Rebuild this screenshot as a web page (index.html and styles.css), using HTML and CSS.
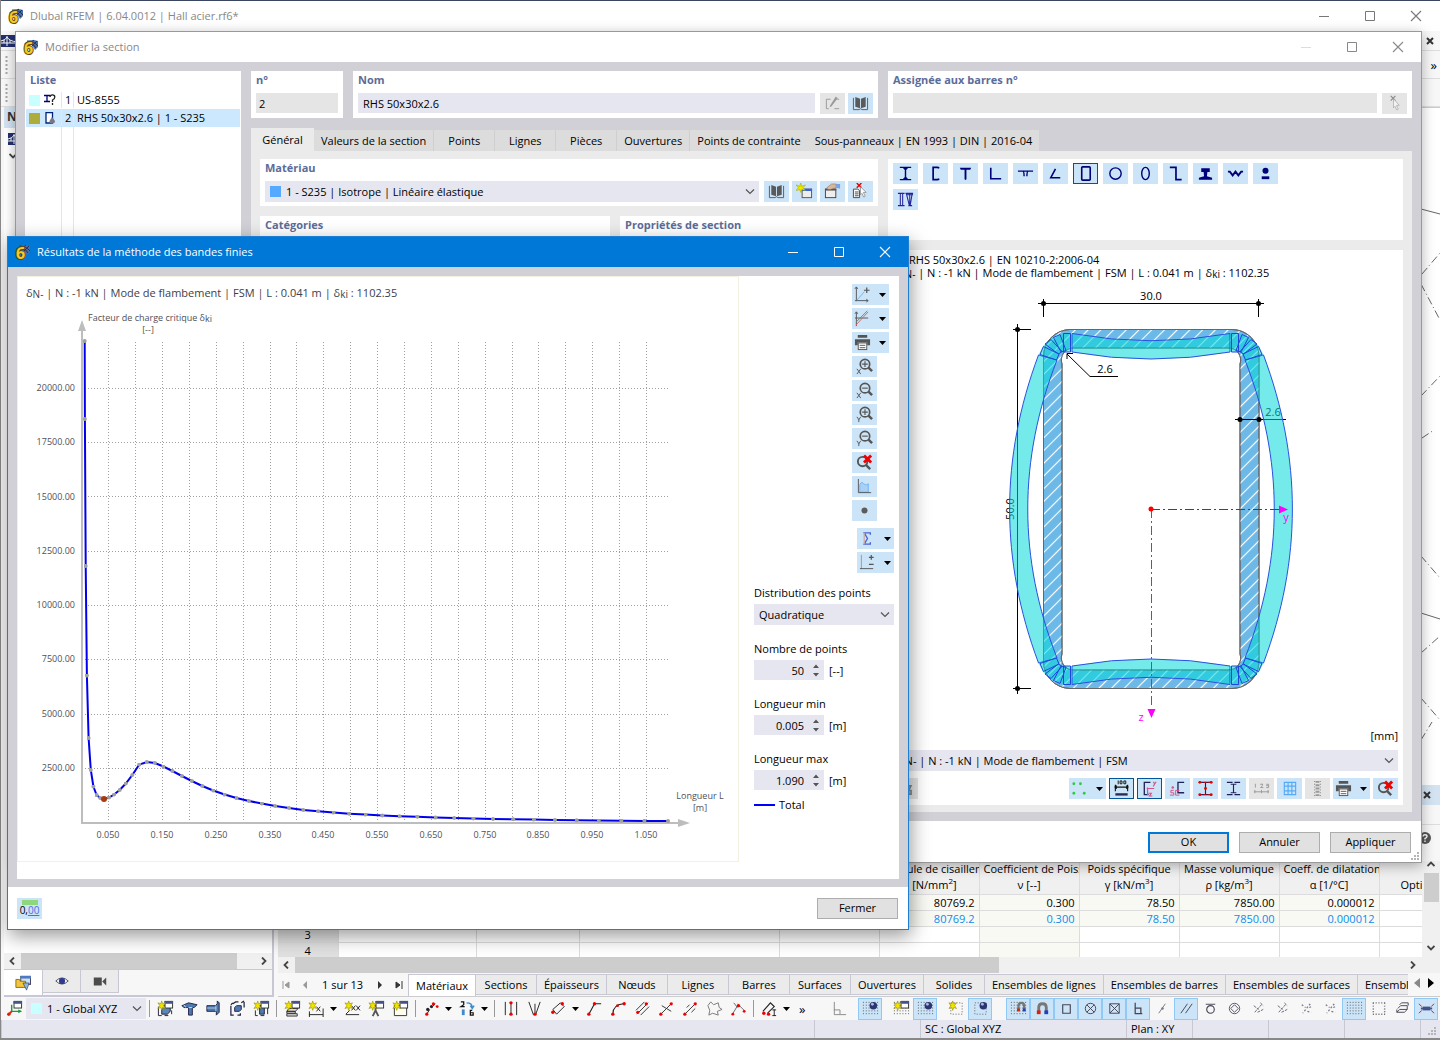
FILE: index.html
```html
<!DOCTYPE html>
<html lang="fr">
<head>
<meta charset="utf-8">
<meta name="viewport" content="width=device-width, initial-scale=1">
<title>Dlubal RFEM | 6.04.0012 | Hall acier.rf6*</title>
<link rel="stylesheet" href="styles.css">
</head>
<body>
<svg class="defs" aria-hidden="true">
<defs>
<symbol id="logo" viewBox="0 0 16 16"><path d="M2 4Q7 -1 15 2L15 8L12 11L9 6Q5 4 2 4Z" fill="#4a6fa8"/><path d="M1.500 5Q8 1 13 9M4 2Q11 2 15 7M6 5L11 1M9 7L14 2" stroke="#22324f" fill="none"/><text x="1" y="15" class="six">6</text></symbol>
<symbol id="min" viewBox="0 0 12 12"><path d="M1 6.500H11" stroke="currentColor"/></symbol>
<symbol id="max" viewBox="0 0 12 12"><path d="M1.500 1.500H10.500V10.500H1.500Z" fill="none" stroke="currentColor"/></symbol>
<symbol id="close" viewBox="0 0 12 12"><path d="M1 1L11 11M11 1L1 11" stroke="currentColor" stroke-width="1.100"/></symbol>
<symbol id="xbold" viewBox="0 0 8 8"><path d="M1 1L7 7M7 1L1 7" stroke="#333" stroke-width="2"/></symbol>
<symbol id="flag" viewBox="0 0 16 12"><path d="M0 0H16V12H0Z" fill="#23306f"/><path d="M0 8H16M6 1V11M0 6Q5 5 6 2Q8 6 16 7M3 5V8M9 5V8" stroke="#fff" fill="none"/></symbol>
<symbol id="grip" viewBox="0 0 3 20"><path d="M1.500 1V20" stroke="#a8a8a8" stroke-width="2" stroke-dasharray="2 2"/></symbol>
<symbol id="chev" viewBox="0 0 10 6"><path d="M1 .5L5 4.500L9 .5" fill="none" stroke="#555" stroke-width="1.200"/></symbol>
<symbol id="caret" viewBox="0 0 7 4"><path d="M0 0H7L3.500 4Z" fill="#000"/></symbol>
<symbol id="spin" viewBox="0 0 6 13"><path d="M0 4L3 0.500L6 4ZM0 9L3 12.500L6 9Z" fill="#555"/></symbol>
<symbol id="al" viewBox="0 0 6 8"><path d="M5 .5L1.500 4L5 7.500" fill="none" stroke="#444" stroke-width="1.800"/></symbol>
<symbol id="ar" viewBox="0 0 6 8"><path d="M1 .5L4.500 4L1 7.500" fill="none" stroke="#444" stroke-width="1.800"/></symbol>
<symbol id="au" viewBox="0 0 8 6"><path d="M.5 5L4 1.500L7.500 5" fill="none" stroke="#444" stroke-width="1.800"/></symbol>
<symbol id="ad" viewBox="0 0 8 6"><path d="M.5 1L4 4.500L7.500 1" fill="none" stroke="#444" stroke-width="1.800"/></symbol>
<symbol id="sizer" viewBox="0 0 9 9"><path d="M6 0h2v2H6zM6 3h2v2H6zM6 6h2v2H6zM3 3h2v2H3zM3 6h2v2H3zM0 6h2v2H0z" fill="#b5b5b5"/></symbol>
<!-- section shapes -->
<symbol id="s-i" viewBox="0 0 18 18"><path d="M3 2.500H15M3 15.500H15M9 2V16M7 3L9 5L11 3M7 15L9 13L11 15" fill="none" stroke="#00007a" stroke-width="1.500"/></symbol>
<symbol id="s-c" viewBox="0 0 18 18"><path d="M13 3L11 2.500H6.500V15.500H11L13 15" fill="none" stroke="#00007a" stroke-width="1.800"/></symbol>
<symbol id="s-t" viewBox="0 0 18 18"><path d="M3 3H15L14 5L10 5V15L9 16L8 15V5L4 5Z" fill="#00007a"/></symbol>
<symbol id="s-l" viewBox="0 0 18 18"><path d="M4 3V14.500H15" fill="none" stroke="#00007a" stroke-width="1.700"/></symbol>
<symbol id="s-tt" viewBox="0 0 18 18"><path d="M1 6.500H6Q7.500 6.500 7.500 12M17 6.500H12Q10.500 6.500 10.500 12M6 6.500H12" fill="none" stroke="#00007a" stroke-width="1.500"/></symbol>
<symbol id="s-a" viewBox="0 0 18 18"><path d="M9 4L4 13.500H14" fill="none" stroke="#00007a" stroke-width="1.700"/></symbol>
<symbol id="s-r" viewBox="0 0 18 18"><rect x="5" y="2" width="9" height="14" rx="1" fill="none" stroke="#00007a" stroke-width="1.700"/></symbol>
<symbol id="s-o" viewBox="0 0 18 18"><circle cx="9" cy="9" r="6" fill="none" stroke="#00007a" stroke-width="1.500"/></symbol>
<symbol id="s-e" viewBox="0 0 18 18"><ellipse cx="9" cy="9" rx="4" ry="6.500" fill="none" stroke="#00007a" stroke-width="1.500"/></symbol>
<symbol id="s-z" viewBox="0 0 18 18"><path d="M3 2.500H9.500V15.500H15.500" fill="none" stroke="#00007a" stroke-width="1.800"/></symbol>
<symbol id="s-rail" viewBox="0 0 18 18"><path d="M4.500 3.500H13.500V7.500H11L10.500 12L16 13.500V15.500H2V13.500L7.500 12L7 7.500H4.500Z" fill="#00007a"/></symbol>
<symbol id="s-w" viewBox="0 0 18 18"><path d="M1 7H3L6 11L9 7L12 11L15 7H17" fill="none" stroke="#00007a" stroke-width="2"/></symbol>
<symbol id="s-m" viewBox="0 0 18 18"><circle cx="9" cy="6" r="3.200" fill="#00007a"/><path d="M5 12H13V15H5Z" fill="#00007a"/></symbol>
<symbol id="s-iv" viewBox="0 0 18 18"><path d="M1 2.500H8M1 15.500H8M3.500 2V16M6 2V16M9 2.500H17M10 4H17M10 3L13 15M16 3L14 15M12 15.500H16M13.500 3V15" fill="none" stroke="#22229a" stroke-width="1.100"/></symbol>
<!-- dialog tools -->
<symbol id="book" viewBox="0 0 18 18"><path d="M3.500 2L8.500 4V14L3.500 12.500ZM14.500 2L9.500 4V14L14.500 12.500Z" fill="#5a5a5a"/><path d="M1.500 3V15.500H7.500L9 14.500L10.500 15.500H16.500V3" fill="none" stroke="#5a5a5a"/></symbol>
<symbol id="edit" viewBox="0 0 18 18"><path d="M7 4.500H2.500V14.500H5M14 4.500H16M11 14.500H16" fill="none" stroke="#999"/><path d="M12.500 1.500L14.500 3.500L8 12L6 13L6.500 11Z" fill="#999"/></symbol>
<symbol id="newwin" viewBox="0 0 18 18"><rect x="6.500" y="6.500" width="10" height="9" fill="#eee" stroke="#555"/><path d="M6 6H17V8.500H6Z" fill="#3c63c8"/><path d="M5 0L6 3.500L10 2L7.500 5L10 8L6 7L5 10L4 7L0 8L2.500 5L0 2L4 3.500Z" fill="#e8e800" stroke="#a09a00" stroke-width=".5"/></symbol>
<symbol id="handwin" viewBox="0 0 18 18"><rect x="1.500" y="6.500" width="11" height="9" fill="#eee" stroke="#444"/><path d="M1 6H13V8H1Z" fill="#555"/><path d="M3 5L8 1L13 1V5L9 6L7 7L4 7Z" fill="#d9b79c" stroke="#8a5c3c" stroke-width=".5"/><path d="M12 1H17V6L13 5Z" fill="#7ba4dc"/></symbol>
<symbol id="pick" viewBox="0 0 18 18"><path d="M1.500 6.500H6L8 8V15.500H1.500Z" fill="#fff" stroke="#444"/><path d="M3 9.500H7M3 11.500H7M3 13.500H7" stroke="#444"/><path d="M5 0L10 5M10 0L5 5" stroke="#e00" stroke-width="1.500"/><path d="M9 4L15 10H12L14 14L12.500 15L10.500 11L9 12.500Z" fill="#fff" stroke="#888" stroke-width=".8"/></symbol>
<symbol id="pickoff" viewBox="0 0 18 18"><path d="M5 1L10 6M10 1L5 6" stroke="#888" stroke-width="1.200"/><path d="M8 4L14 11H11L13 15L11.500 16L9.500 12L8 13.500Z" fill="#f4f4f4" stroke="#aaa" stroke-width=".8"/></symbol>
<symbol id="axp" viewBox="0 0 18 18"><path d="M2.500 1V16M1 15.500H15M1 3L2.500 1L4 3M13 14L15 15.500L13 17" fill="none" stroke="#555"/><path d="M3 15L11 6" stroke="#6cb4f4"/><path d="M13.500 1.500V7.500M10.500 4.500H16.500" stroke="#555" stroke-width="1.300"/></symbol>
<symbol id="axl" viewBox="0 0 18 18"><path d="M2.500 2V17M1 8.500H15M1 4L2.500 2L4 4" fill="none" stroke="#555"/><path d="M2 13L14 1" stroke="#3a9a6a"/><path d="M2 16L15 2" stroke="#c66"/></symbol>
<symbol id="print" viewBox="0 0 18 18"><path d="M4 1H14V4H4ZM1 5.500H17V12H14V9H4V12H1Z" fill="#555"/><rect x="4.500" y="9.500" width="9" height="7" fill="#fff" stroke="#555"/><path d="M6 12H12M6 14.500H12" stroke="#555"/></symbol>
<symbol id="lens" viewBox="0 0 18 18"><circle cx="9.500" cy="6.500" r="5" fill="none" stroke="#555" stroke-width="1.800"/><path d="M13 10L17 14" stroke="#555" stroke-width="2.600"/></symbol>
<symbol id="zxp" viewBox="0 0 18 18"><use href="#lens"/><path d="M9.500 3.500V9.500M6.500 6.500H12.500" stroke="#555" stroke-width="1.200"/><path d="M1 11.500L5 17M5 11.500L1 17" stroke="#555"/></symbol>
<symbol id="zxm" viewBox="0 0 18 18"><use href="#lens"/><path d="M6.500 6.500H12.500" stroke="#555" stroke-width="1.200"/><path d="M1 11.500L5 17M5 11.500L1 17" stroke="#555"/></symbol>
<symbol id="zyp" viewBox="0 0 18 18"><use href="#lens"/><path d="M9.500 3.500V9.500M6.500 6.500H12.500" stroke="#555" stroke-width="1.200"/><path d="M1 11.500L3 14.500L5 11.500M3 14V17" stroke="#555" fill="none"/></symbol>
<symbol id="zym" viewBox="0 0 18 18"><use href="#lens"/><path d="M6.500 6.500H12.500" stroke="#555" stroke-width="1.200"/><path d="M1 11.500L3 14.500L5 11.500M3 14V17" stroke="#555" fill="none"/></symbol>
<symbol id="zx" viewBox="0 0 18 18"><circle cx="7" cy="8" r="5" fill="none" stroke="#555" stroke-width="2"/><path d="M10.500 11.500L15 16" stroke="#555" stroke-width="2.600"/><path d="M8.500 1.500L16 9M16 1.500L8.500 9" stroke="#f00000" stroke-width="3"/></symbol>
<symbol id="area" viewBox="0 0 18 18"><path d="M4 15V7Q6 3 8 6Q11 9 13 6V15Z" fill="#a9d0f5" stroke="#6cb4f4"/><path d="M2.500 1V15.500H16" fill="none" stroke="#555"/></symbol>
<symbol id="dot" viewBox="0 0 18 18"><circle cx="9" cy="9" r="3.200" fill="#5c5c5c"/></symbol>
<symbol id="sigma" viewBox="0 0 18 18"><path d="M12 5V3H5.500L9 9L5.500 15H12V13" fill="none" stroke="#4863d8" stroke-width="1.400"/><path d="M5.500 3V15" stroke="#c9a9a0" stroke-width="1.300"/></symbol>
<symbol id="axpm" viewBox="0 0 18 18"><path d="M2.500 1V16" stroke="#999"/><path d="M1 15.500H15" stroke="#555"/><path d="M13 1V6M10.500 3.500H15.500M10.500 11H15.500" stroke="#555" stroke-width="1.300"/></symbol>
<symbol id="green" viewBox="0 0 18 18"><g fill="#2ecc40"><circle cx="3" cy="4" r="1.500"/><circle cx="10" cy="4" r="1.500"/><circle cx="3" cy="14" r="1.500"/><circle cx="14" cy="14" r="1.500"/></g></symbol>
<symbol id="dim" viewBox="0 0 18 18"><path d="M2.500 5V12M15.500 5V12M2 7.500H16M4 6L2 7.500L4 9M14 6L16 7.500L14 9" stroke="#111" fill="none" stroke-width="1.200"/><path d="M2.500 14H15.500V16.500H2.500Z" fill="#2a2a55"/><path d="M5.500 .5V4.500M7.500 1H9.500V4H7.500ZM11.500 1H13.500V4H11.500Z" stroke="#111" fill="none"/></symbol>
<symbol id="cyz" viewBox="0 0 18 18"><path d="M10 2.500H3.500V15.500H8" fill="none" stroke="#22225a" stroke-width="1.400"/><path d="M6 9H14M7 8V16M13 2L14.500 4L16 2M14.500 4L13 7M8 14H11L9 17H12" stroke="#d8508c" fill="none" stroke-width="1.200"/></symbol>
<symbol id="sc" viewBox="0 0 18 18"><path d="M16 2.500H9.500V13.500H16" fill="none" stroke="#22225a" stroke-width="1.400"/><path d="M5 11H2V13.500H5V16H1M11 11H7V16H11" fill="none" stroke="#d8508c"/><circle cx="4" cy="8" r="1.300" fill="#d8508c"/></symbol>
<symbol id="ired" viewBox="0 0 18 18"><path d="M2 2.500H16M2 15.500H16M9 2V16" stroke="#22225a" stroke-width="1.200"/><path d="M2 2.500H16M2 15.500H16" stroke="#e00000" stroke-dasharray="3 2"/><g fill="#e00000"><circle cx="3" cy="2.500" r="1.500"/><circle cx="15" cy="2.500" r="1.500"/><circle cx="9" cy="9" r="1.500"/><circle cx="3" cy="15.500" r="1.500"/><circle cx="15" cy="15.500" r="1.500"/></g></symbol>
<symbol id="iblue" viewBox="0 0 18 18"><path d="M2 2.500H8M10 2.500H16M2 15.500H8M10 15.500H16M9 5V13M6 4.500H12M6 13.500H12" stroke="#22225a" stroke-width="1.200"/></symbol>
<symbol id="n123" viewBox="0 0 18 18"><path d="M2.500 4V8M7.500 4.500H10M8 8H11M10 4V6L8 8M14 4.500H16.500V8H14M14 6H16M1 12.500H17M2 10.500V14M9 10.500V14M16 10.500V14" stroke="#999" fill="none"/></symbol>
<symbol id="gridb" viewBox="0 0 18 18"><path d="M3.500 2.500H15.500V15.500H3.500ZM7.500 2V16M11.500 2V16M3 6.500H16M3 11.500H16" fill="none" stroke="#55aaf5" stroke-width="1.200"/></symbol>
<symbol id="ruler" viewBox="0 0 18 18"><path d="M9 1V17" stroke="#999" stroke-width="4" stroke-dasharray="2 1.500"/><path d="M6 1V17M12 1V17" stroke="#777" stroke-dasharray="1 2"/></symbol>
<symbol id="tool" viewBox="0 0 18 18"><path d="M11 3V8M8 6H15L13 10M9 11H15V15H9Z" stroke="#888" stroke-width="1.500" fill="#aaa"/></symbol>
<symbol id="help" viewBox="0 0 12 12"><circle cx="6" cy="6" r="6" fill="#555"/><path d="M4 4.500Q4.200 2.800 6 2.800Q8 2.800 8 4.500Q8 5.500 6 6.500V7.500M6 8.500V10" stroke="#fff" fill="none" stroke-width="1.400"/></symbol>
<!-- bottom toolbar -->
<symbol id="b-win" viewBox="0 0 18 18"><rect x="8.500" y="1.500" width="8" height="7" fill="#fff" stroke="#333"/><path d="M8 1H17V4H8Z" fill="#44538c"/></symbol>
<symbol id="b-star" viewBox="0 0 18 18"><path d="M5 1L6 4L9 3L7 6L9 9L6 8L5 11L4 8L1 9L3 6L1 3L4 4Z" fill="#f2e400" stroke="#8d8500" stroke-width=".6"/></symbol>
<symbol id="b-org" viewBox="0 0 18 18"><use href="#b-win"/><path d="M6 5V12H16" stroke="#1c9a3a" stroke-width="1.500" fill="none"/><path d="M13 10L17 12L13 14Z" fill="#1c9a3a"/><path d="M6 12L2 16" stroke="#d20" stroke-width="2"/><circle cx="3" cy="15" r="1.800" fill="#d20"/></symbol>
<symbol id="b-cube" viewBox="0 0 18 18"><path d="M5 8L8 5H14V12L11 15H5Z" fill="#5b86b8" stroke="#223"/><path d="M1.500 7V16.500H5M8 16.500H12M15.500 15V11" stroke="#224" fill="none"/></symbol>
<symbol id="b1" viewBox="0 0 18 18"><use href="#b-cube"/><use href="#b-win"/><use href="#b-star"/></symbol>
<symbol id="b2" viewBox="0 0 18 18"><path d="M1 6L8 3L17 5L14 8H12V16H8V8H3Z" fill="#4d7ab0" stroke="#224"/><path d="M8 8H12M3 5L5 8" stroke="#cde"/></symbol>
<symbol id="b3" viewBox="0 0 18 18"><path d="M2 6H11L13 4V1L15 3V13L12 16V12H2Z" fill="#4d7ab0" stroke="#224"/><path d="M2 8.500H12M11.500 6V12" stroke="#bcd"/></symbol>
<symbol id="b4" viewBox="0 0 18 18"><path d="M6 8L8 6H13V10L11 12H6Z" fill="#4d7ab0" stroke="#224"/><path d="M2 6V16H5M9 16H12V14M4 4L7 2H10M16 2V8M2 5L4 3M13 3L16 1" stroke="#224" fill="none" stroke-width="1.300"/></symbol>
<symbol id="b5" viewBox="0 0 18 18"><path d="M7 6H12V15H7Z" fill="#4d7ab0" stroke="#224"/><path d="M2.500 11V16.500H5M8 16.500H12M15.500 15V8" stroke="#224" fill="none"/><use href="#b-win"/><use href="#b-star"/></symbol>
<symbol id="b6" viewBox="0 0 18 18"><path d="M5 9H15L12 12H3ZM3 12H12V14H3ZM3 14.500H14V17H3Z" fill="#ddd" stroke="#333"/><use href="#b-win"/><use href="#b-star"/></symbol>
<symbol id="b7" viewBox="0 0 18 18"><path d="M1 15.500H16M1.500 12V18M16 9V18M9 7L13 12M13 7L9 12" stroke="#222"/><use href="#b-star"/></symbol>
<symbol id="b8" viewBox="0 0 18 18"><path d="M2 15.500H16M2 15L6 11M8 6L12 11M12 6L8 11M13 6L17 11M17 6L13 11" stroke="#222"/><use href="#b-star"/></symbol>
<symbol id="b9" viewBox="0 0 18 18"><path d="M2 7H14M8 5V11L5 17M8 11L11 17" stroke="#555" stroke-width="2" fill="none"/><use href="#b-win"/><use href="#b-star"/></symbol>
<symbol id="b10" viewBox="0 0 18 18"><path d="M2.500 5.500H15.500V16.500H2.500Z" fill="#fffff0" stroke="#333"/><use href="#b-win"/><use href="#b-star"/></symbol>
<symbol id="c1" viewBox="0 0 18 18"><path d="M4 15L7 10M9 8L13 4" stroke="#111"/><circle cx="4" cy="15" r="1.700" fill="#e00"/><circle cx="5" cy="10" r="1.700" fill="#222"/><circle cx="9" cy="7" r="1.700" fill="#222"/><circle cx="11" cy="4" r="1.700" fill="#e00"/><circle cx="15" cy="7" r="1.500" fill="#e00"/></symbol>
<symbol id="c2" viewBox="0 0 18 18"><path d="M2 2H5V5L2 7H6M14 11H12V16H15V13.500H12" fill="none" stroke="#111" stroke-width="1.300"/><path d="M3 10H6V16H3Z" fill="#3d8ad0"/><path d="M8 3Q14 3 14 8M12 6L14 9L16 6" stroke="#3d8ad0" fill="none" stroke-width="1.500"/></symbol>
<symbol id="d1" viewBox="0 0 18 18"><path d="M3.500 2V16M15.500 2V16M9.500 3V15" stroke="#222"/><circle cx="9.500" cy="3" r="1.800" fill="#e00"/><circle cx="9.500" cy="15" r="1.800" fill="#e00"/></symbol>
<symbol id="d2" viewBox="0 0 18 18"><path d="M3 2L8 16M15 2L10 16M9.500 4V15" stroke="#222"/><circle cx="9.500" cy="15" r="1.800" fill="#e00"/></symbol>
<symbol id="d3" viewBox="0 0 18 18"><path d="M3 10L11 3L15 7L7 15Z" fill="none" stroke="#222"/><circle cx="3" cy="13" r="1.800" fill="#e00"/><circle cx="13" cy="4" r="1.800" fill="#e00"/></symbol>
<symbol id="d4" viewBox="0 0 18 18"><path d="M3 15L9 4H16" fill="none" stroke="#222" stroke-width="1.200"/><circle cx="3" cy="15" r="1.800" fill="#e00"/><circle cx="9" cy="4" r="1.800" fill="#e00"/></symbol>
<symbol id="d5" viewBox="0 0 18 18"><path d="M3 15Q3 5 14 4" fill="none" stroke="#222" stroke-width="1.200"/><circle cx="3" cy="15" r="1.800" fill="#e00"/><circle cx="8" cy="6" r="1.500" fill="#e00"/><circle cx="15" cy="4" r="1.800" fill="#e00"/></symbol>
<symbol id="d6" viewBox="0 0 18 18"><path d="M3 15L15 3M2 11L11 2M7 16L16 7" stroke="#333"/><circle cx="4" cy="13" r="1.700" fill="#e00"/><circle cx="13" cy="4" r="1.700" fill="#e00"/></symbol>
<symbol id="d7" viewBox="0 0 18 18"><path d="M3 15L15 3M4 6L14 12" stroke="#333"/><circle cx="3" cy="15" r="1.700" fill="#e00"/><circle cx="14" cy="4" r="1.700" fill="#e00"/></symbol>
<symbol id="d8" viewBox="0 0 18 18"><path d="M3 15L15 3M5 8L8 5M10 13L14 9" stroke="#333"/><circle cx="3" cy="15" r="1.700" fill="#e00"/><circle cx="14" cy="4" r="1.700" fill="#e00"/></symbol>
<symbol id="d9" viewBox="0 0 18 18"><path d="M2 6L5 2L8 5L13 3L14 8L17 10L12 12L13 16L7 14L3 16L4 11Z" fill="none" stroke="#777"/></symbol>
<symbol id="d10" viewBox="0 0 18 18"><path d="M2 16L8 6M8 4L15 11M4 3L8 8" stroke="#666" fill="none"/><circle cx="3" cy="15" r="1.500" fill="#e00"/><circle cx="9" cy="6" r="1.800" fill="#e00"/><circle cx="15" cy="12" r="1.500" fill="#e00"/></symbol>
<symbol id="d11" viewBox="0 0 18 18"><path d="M2 12L10 3L14 7L7 14" fill="none" stroke="#222" stroke-width="1.200"/><circle cx="3" cy="14" r="1.800" fill="#e00"/><circle cx="8" cy="15" r="1.800" fill="#e00"/><path d="M12 10.500H16M14 10V17M12 16.500H16" stroke="#222"/></symbol>
<symbol id="perp" viewBox="0 0 18 18"><path d="M3.500 2V15.500H16M3 10.500H9.500V15" fill="none" stroke="#888"/></symbol>
<symbol id="dots" viewBox="0 0 18 18"><path d="M1.500 2V17M4.500 2V17M7.500 2V17M10.500 2V17M13.500 2V17M16.500 2V17" stroke="#555" stroke-dasharray="1 2"/></symbol>
<symbol id="eyeball" viewBox="0 0 18 18"><circle cx="12" cy="6" r="4" fill="#2c3570"/><circle cx="11" cy="4.500" r="1.500" fill="#aab4e8"/></symbol>
<symbol id="g1" viewBox="0 0 18 18"><use href="#dots"/><use href="#eyeball"/></symbol>
<symbol id="g2" viewBox="0 0 18 18"><use href="#dots"/><use href="#b-win"/><use href="#b-star"/></symbol>
<symbol id="g3" viewBox="0 0 18 18"><path d="M3 3H15V15H3Z" fill="none" stroke="#555" stroke-dasharray="1 2"/><use href="#b-star"/></symbol>
<symbol id="g4" viewBox="0 0 18 18"><path d="M3 3H15V15H3Z" fill="none" stroke="#555" stroke-dasharray="1 2"/><use href="#eyeball"/></symbol>
<symbol id="mag" viewBox="0 0 18 18"><path d="M5 14V8Q5 4 9 4Q13 4 13 8V14" fill="none" stroke="#777" stroke-width="3"/><path d="M3 11H7V15H3Z" fill="#e02000"/><path d="M11 11H15V15H11Z" fill="#1f3fc0"/></symbol>
<symbol id="g5" viewBox="0 0 18 18"><use href="#dots"/><path d="M9 12V6Q9 3 12 3Q15 3 15 6V12" fill="none" stroke="#777" stroke-width="2.500"/><path d="M7.500 9H10.500V12H7.500Z" fill="#e02000"/><path d="M13.500 9H16.500V12H13.500Z" fill="#1f3fc0"/></symbol>
<symbol id="h1" viewBox="0 0 18 18"><path d="M5 5H13V14H5Z" fill="none" stroke="#445" stroke-width="1.200"/></symbol>
<symbol id="h2" viewBox="0 0 18 18"><circle cx="9" cy="9" r="5.500" fill="none" stroke="#445"/><path d="M5 5L13 13M13 5L5 13" stroke="#445"/></symbol>
<symbol id="h3" viewBox="0 0 18 18"><path d="M4 4H14V14H4ZM4 4L14 14M14 4L4 14" fill="none" stroke="#445"/></symbol>
<symbol id="h4" viewBox="0 0 18 18"><path d="M5.500 3V14.500H13M6 8.500H11.500V14" fill="none" stroke="#445" stroke-width="1.300"/></symbol>
<symbol id="h5" viewBox="0 0 18 18"><path d="M5 14L12 4" stroke="#778"/><circle cx="9" cy="9" r="1.300" fill="#778"/></symbol>
<symbol id="h6" viewBox="0 0 18 18"><path d="M3 14L10 4M8 14L15 4" stroke="#445"/></symbol>
<symbol id="h7" viewBox="0 0 18 18"><circle cx="9" cy="10" r="4" fill="none" stroke="#445" stroke-width="1.200"/><path d="M4 4.500H14" stroke="#445"/></symbol>
<symbol id="h8" viewBox="0 0 18 18"><circle cx="9" cy="9" r="5.500" fill="none" stroke="#556"/><path d="M9 5L13 9L9 13L5 9Z" fill="none" stroke="#556"/></symbol>
<symbol id="h9" viewBox="0 0 18 18"><path d="M5 13L13 4M4 6L9 10M8 13L14 10M11 3L14 6" stroke="#667" stroke-dasharray="3 1"/></symbol>
<symbol id="h10" viewBox="0 0 18 18"><path d="M4 5L8 8M13 4L9 9L5 14M10 12L14 13M12 8L14 7" stroke="#778" stroke-dasharray="2 2" stroke-width="1.300"/></symbol>
<symbol id="h11" viewBox="0 0 18 18"><path d="M3 3H16M3 15H16M3.500 3V15M15.500 3V15" stroke="#556" stroke-dasharray="1 2" stroke-width="1.500"/></symbol>
<symbol id="h12" viewBox="0 0 18 18"><path d="M3 13L6 10H14L11 13ZM3 10V13M4 9L7 6H14V10M6 5L8 3H15V6" fill="none" stroke="#445"/></symbol>
<symbol id="h13" viewBox="0 0 18 18"><path d="M5 7H13V11H5Z" fill="#44538c"/><path d="M3 9H15" stroke="#44538c" stroke-width="2"/><path d="M1 4L4 7M17 4L14 7M1 14L4 11M17 14L14 11" stroke="#e00"/></symbol>
<symbol id="folder" viewBox="0 0 18 18"><rect x="6.500" y="1.500" width="11" height="9" fill="#cfe0f5" stroke="#335"/><path d="M6 1H18V4H6Z" fill="#4d7ac0"/><path d="M1 5H5L6 7H12V14H1Z" fill="#f2c53c" stroke="#8a6a10"/><path d="M9 9L16 9L13 17Z" fill="#8fb8d8" stroke="#235" stroke-width=".7"/></symbol>
<symbol id="eye" viewBox="0 0 18 18"><path d="M2 9Q9 2 16 9Q9 16 2 9Z" fill="#fff" stroke="#445"/><circle cx="9" cy="9" r="3.500" fill="#2c3a90"/></symbol>
<symbol id="cam" viewBox="0 0 18 18"><path d="M2 5H11V14H2ZM11.500 9.500L16 5V14Z" fill="#4c4c4c"/></symbol>
</defs>
</svg>

<div class="desktop">
<main class="app">
  <header class="titlebar titlebar-main">
    <svg class="logo"><use href="#logo"/></svg><h1>Dlubal RFEM | 6.04.0012 | Hall acier.rf6*</h1>
    <div class="wincontrols"><button aria-label="Réduire"><svg><use href="#min"/></svg></button><button aria-label="Agrandir"><svg><use href="#max"/></svg></button><button aria-label="Quitter"><svg><use href="#close"/></svg></button></div>
  </header>
  <div class="strip strip-menu"><svg class="flag"><use href="#flag"/></svg><svg class="x"><use href="#xbold"/></svg></div>
  <div class="strip strip-tools"><svg class="gripper"><use href="#grip"/></svg><span>»</span></div>
  <div class="strip strip-tools"><svg class="gripper"><use href="#grip"/></svg></div>
  <div class="workspace">
    <aside class="navigator">
      <h2>Navigateur</h2>
      <div class="tree"><svg class="flag"><use href="#flag"/></svg><svg class="twist"><use href="#ad"/></svg></div>
      <div class="hscroll"><svg class="h"><use href="#al"/></svg><i class="nav-thumb"></i><svg class="h"><use href="#ar"/></svg></div>
      <div class="navtabs"><button class="on" aria-label="Données"><svg><use href="#folder"/></svg></button><button aria-label="Affichage"><svg><use href="#eye"/></svg></button><button aria-label="Vues"><svg><use href="#cam"/></svg></button></div>
    </aside>
    <section class="right">
      <div class="view">
        <svg class="model" viewBox="0 0 20 640" fill="none" stroke="#666"><path d="M1 101L20 106M1 505L20 511"/><path d="M2 166L20 145M1 176L20 212M1 288L20 268M2 330L14 322M1 448L20 470M1 545L20 528M1 590L20 612M1 632L12 614" stroke-dasharray="8 3 1 3"/></svg>
      </div>
      <div class="panelhead"><svg class="x"><use href="#xbold"/></svg></div>
      <div class="panelmenu"></div>
      <div class="paneltools"><svg class="help"><use href="#help"/></svg></div>
      <div class="gridrow">
        <div class="gridwrap">
        <table class="grid">
          <colgroup><col class="c60"><col class="c138"><col class="c103"><col class="c200"><col class="c100"><col class="c100"><col class="c100"><col class="c100"><col class="c100"><col class="c100"><col class="c100"></colgroup>
          <thead><tr><th></th><th></th><th></th><th></th><th></th><th>Module de cisaillement<br>G [N/mm<sup>2</sup>]</th><th>Coefficient de Poisson<br>ν [--]</th><th>Poids spécifique<br>γ [kN/m<sup>3</sup>]</th><th>Masse volumique<br>ρ [kg/m<sup>3</sup>]</th><th>Coeff. de dilatation<br>α [1/°C]</th><th class="opt"><br>Options</th></tr></thead>
          <tbody>
            <tr><th>1</th><td></td><td></td><td></td><td></td><td>80769.2</td><td>0.300</td><td>78.50</td><td>7850.00</td><td>0.000012</td><td class="w"></td></tr>
            <tr class="link"><th>2</th><td></td><td></td><td></td><td></td><td>80769.2</td><td>0.300</td><td>78.50</td><td>7850.00</td><td>0.000012</td><td class="w"></td></tr>
            <tr class="empty"><th>3</th><td></td><td></td><td></td><td></td><td></td><td class="nu"></td><td></td><td></td><td></td><td></td></tr>
            <tr class="empty"><th>4</th><td></td><td></td><td></td><td></td><td></td><td class="nu"></td><td></td><td></td><td></td><td></td></tr>
          </tbody>
        </table>
        </div>
        <div class="vscroll"><svg class="v"><use href="#au"/></svg><i></i><svg class="v"><use href="#ad"/></svg></div>
      </div>
      <div class="hscroll hscroll-grid"><svg class="h"><use href="#al"/></svg><i class="grid-thumb"></i><svg class="h"><use href="#ar"/></svg></div>
      <nav class="sheets">
        <div class="pager"><svg viewBox="0 0 8 8"><path d="M1 0V8M7 1V7L3 4Z" fill="#999" stroke="#999"/></svg><svg viewBox="0 0 8 8"><path d="M6 0V8L2 4Z" fill="#999"/></svg><span>1 sur 13</span><svg viewBox="0 0 8 8"><path d="M2 0V8L6 4Z" fill="#333"/></svg><svg viewBox="0 0 8 8"><path d="M7 0V8M1 1V7L5 4Z" fill="#333" stroke="#333"/></svg></div>
        <button class="on">Matériaux</button><button>Sections</button><button>Épaisseurs</button><button>Nœuds</button><button>Lignes</button><button>Barres</button><button>Surfaces</button><button>Ouvertures</button><button>Solides</button><button>Ensembles de lignes</button><button>Ensembles de barres</button><button>Ensembles de surfaces</button><button class="last">Ensembles de solides</button>
        <div class="sheetnav"><svg viewBox="0 0 6 10"><path d="M6 0V10L0 5Z" fill="#888"/></svg><svg viewBox="0 0 6 10"><path d="M0 0V10L6 5Z" fill="#000"/></svg></div>
      </nav>
    </section>
  </div>
  <div class="toolbar">
    <button aria-label="Système de coordonnées"><svg><use href="#b-org"/></svg></button>
    <div class="field cs"><i class="swatch cyan"></i><select aria-label="Système"><option>1 - Global XYZ</option></select><svg class="chev"><use href="#chev"/></svg></div>
    <i class="sep"></i>
    <button aria-label="Nouveau solide"><svg><use href="#b1"/></svg></button><button aria-label="Vue 1"><svg><use href="#b2"/></svg></button><button aria-label="Vue 2"><svg><use href="#b3"/></svg></button><button aria-label="Vue 3"><svg><use href="#b4"/></svg></button><button aria-label="Vue 4"><svg><use href="#b5"/></svg></button>
    <i class="sep"></i>
    <button aria-label="Couches"><svg><use href="#b6"/></svg></button><button aria-label="Cote"><svg><use href="#b7"/></svg></button><svg class="caret"><use href="#caret"/></svg><button aria-label="Repère"><svg><use href="#b8"/></svg></button><button aria-label="Objet"><svg><use href="#b9"/></svg></button><button aria-label="Note"><svg><use href="#b10"/></svg></button>
    <i class="sep"></i>
    <button aria-label="Diviser"><svg><use href="#c1"/></svg></button><svg class="caret"><use href="#caret"/></svg><button aria-label="Renuméroter"><svg><use href="#c2"/></svg></button><svg class="caret"><use href="#caret"/></svg>
    <i class="sep"></i>
    <button aria-label="Ligne 1"><svg><use href="#d1"/></svg></button><button aria-label="Ligne 2"><svg><use href="#d2"/></svg></button><button aria-label="Ligne 3"><svg><use href="#d3"/></svg></button><svg class="caret"><use href="#caret"/></svg><button aria-label="Ligne 4"><svg><use href="#d4"/></svg></button><button aria-label="Ligne 5"><svg><use href="#d5"/></svg></button><button aria-label="Ligne 6"><svg><use href="#d6"/></svg></button><button aria-label="Ligne 7"><svg><use href="#d7"/></svg></button><button aria-label="Ligne 8"><svg><use href="#d8"/></svg></button><button aria-label="Ligne 9"><svg><use href="#d9"/></svg></button><button aria-label="Ligne 10"><svg><use href="#d10"/></svg></button>
    <i class="sep"></i>
    <button aria-label="Polyligne"><svg><use href="#d11"/></svg></button><svg class="caret"><use href="#caret"/></svg><span class="more">»</span>
    <div class="group"><button aria-label="Plan"><svg><use href="#perp"/></svg></button></div>
    <div class="group tight"><button class="on" aria-label="Grille"><svg><use href="#g1"/></svg></button></div>
    <div class="group tight"><button aria-label="Nouvelle grille"><svg><use href="#g2"/></svg></button><button class="on" aria-label="Voir grille"><svg><use href="#g1"/></svg></button></div>
    <div class="group tight"><button aria-label="Nouvelle ligne"><svg><use href="#g3"/></svg></button><button class="on" aria-label="Voir lignes"><svg><use href="#g4"/></svg></button></div>
    <div class="group"><button class="on" aria-label="Accrochage grille"><svg><use href="#g5"/></svg></button><button class="on" aria-label="Accrochage"><svg><use href="#mag"/></svg></button><button class="on" aria-label="Nœud"><svg><use href="#h1"/></svg></button><button class="on" aria-label="Centre"><svg><use href="#h2"/></svg></button><button class="on" aria-label="Milieu"><svg><use href="#h3"/></svg></button><button class="on" aria-label="Perpendiculaire"><svg><use href="#h4"/></svg></button><button aria-label="Point"><svg><use href="#h5"/></svg></button><button class="on" aria-label="Parallèle"><svg><use href="#h6"/></svg></button><button aria-label="Tangente"><svg><use href="#h7"/></svg></button><button aria-label="Quadrant"><svg><use href="#h8"/></svg></button><button aria-label="Guide 1"><svg><use href="#h9"/></svg></button><button aria-label="Guide 2"><svg><use href="#h9"/></svg></button><button aria-label="Guide 3"><svg><use href="#h10"/></svg></button><button aria-label="Guide 4"><svg><use href="#h10"/></svg></button><button class="on" aria-label="Trame"><svg><use href="#dots"/></svg></button><button aria-label="Cadre"><svg><use href="#h11"/></svg></button><button aria-label="Calques"><svg><use href="#h12"/></svg></button><button class="on" aria-label="Section"><svg><use href="#h13"/></svg></button></div>
  </div>
  <footer class="status"><span class="st-a"></span><span class="st-b"></span><span class="st-c">SC : Global XYZ</span><span class="st-d">Plan : XY</span><span class="st-e"></span><span class="st-e"></span><span class="st-e"></span><span class="st-f"><svg><use href="#sizer"/></svg></span></footer>
</main>

<section class="dialog section-dialog" role="dialog" aria-label="Modifier la section">
  <header class="titlebar">
    <svg class="logo"><use href="#logo"/></svg><h2>Modifier la section</h2>
    <div class="wincontrols"><button class="faint" aria-label="Réduire"><svg><use href="#min"/></svg></button><button aria-label="Agrandir"><svg><use href="#max"/></svg></button><button aria-label="Fermer"><svg><use href="#close"/></svg></button></div>
  </header>
  <div class="sec-body">
    <div class="card list">
      <h3>Liste</h3>
      <ul>
        <li><i class="swatch cyan"></i><svg viewBox="0 0 12 12"><path d="M0 1.500H6M0 7.500H6M3 1V8" stroke="#00007a" fill="none" stroke-width="1.300"/><path d="M6 3Q6 .8 8.500 .8Q10.800 .8 10.800 3Q10.800 5 8.500 6V8M8.500 9V11" stroke="#222" fill="none" stroke-width="1.300"/></svg><b>1</b><span>US-8555</span></li>
        <li class="sel"><i class="swatch olive"></i><svg viewBox="0 0 12 12"><path d="M2 .7H8.500V11H2Z" fill="#fff" stroke="#00237a" stroke-width="1.300"/><path d="M8 5L11 9Q11 11.500 8 11.500Q5 11.500 5.500 9Z" fill="#778"/></svg><b>2</b><span>RHS 50x30x2.6 | 1 - S235</span></li>
      </ul>
      <div class="listfill"></div>
    </div>
    <div class="card"><h3><label for="num">n°</label></h3><div class="row"><input id="num" class="off" value="2" disabled></div></div>
    <div class="card"><h3><label for="nom">Nom</label></h3><div class="row"><div class="grow"><input id="nom" value="RHS 50x30x2.6"></div><button class="ib off" aria-label="Modifier le nom" disabled><svg><use href="#edit"/></svg></button><button class="ib" aria-label="Bibliothèque"><svg><use href="#book"/></svg></button></div></div>
    <div class="card"><h3><label for="barres">Assignée aux barres n°</label></h3><div class="row"><div class="grow"><input id="barres" class="off" value="" disabled></div><button class="ib off" aria-label="Sélectionner" disabled><svg><use href="#pickoff"/></svg></button></div></div>
    <div class="tabs">
      <button class="on">Général</button><button>Valeurs de la section</button><button>Points</button><button>Lignes</button><button>Pièces</button><button>Ouvertures</button><button class="plain">Points de contrainte</button><button class="plain">Sous-panneaux | EN 1993 | DIN | 2016-04</button>
    </div>
    <div class="tabpage">
      <div class="leftcol">
        <div class="card mat"><h3><label for="mat">Matériau</label></h3><div class="row"><div class="grow field"><i class="swatch blue"></i><select id="mat"><option>1 - S235 | Isotrope | Linéaire élastique</option></select><svg class="chev"><use href="#chev"/></svg></div><button class="ib" aria-label="Bibliothèque de matériaux"><svg><use href="#book"/></svg></button><button class="ib" aria-label="Nouveau matériau"><svg><use href="#newwin"/></svg></button><button class="ib" aria-label="Modifier le matériau"><svg><use href="#handwin"/></svg></button><button class="ib" aria-label="Choisir le matériau"><svg><use href="#pick"/></svg></button></div></div>
        <div class="card cat"><h3>Catégories</h3></div>
        <div class="card prop"><h3>Propriétés de section</h3></div>
      </div>
      <div class="rightcol">
        <div class="card shapes">
          <button class="ib" aria-label="I"><svg><use href="#s-i"/></svg></button><button class="ib" aria-label="C"><svg><use href="#s-c"/></svg></button><button class="ib" aria-label="T"><svg><use href="#s-t"/></svg></button><button class="ib" aria-label="L"><svg><use href="#s-l"/></svg></button><button class="ib" aria-label="Double T"><svg><use href="#s-tt"/></svg></button><button class="ib" aria-label="Angle"><svg><use href="#s-a"/></svg></button><button class="ib picked" aria-label="Rectangle creux"><svg><use href="#s-r"/></svg></button><button class="ib" aria-label="Tube"><svg><use href="#s-o"/></svg></button><button class="ib" aria-label="Ovale"><svg><use href="#s-e"/></svg></button><button class="ib" aria-label="Z"><svg><use href="#s-z"/></svg></button><button class="ib" aria-label="Rail"><svg><use href="#s-rail"/></svg></button><button class="ib" aria-label="Ondulé"><svg><use href="#s-w"/></svg></button><button class="ib" aria-label="Massif"><svg><use href="#s-m"/></svg></button><button class="ib" aria-label="Composé"><svg><use href="#s-iv"/></svg></button>
        </div>
        <div class="card preview">
          <p>RHS 50x30x2.6 | EN 10210-2:2006-04</p>
          <p class="mode">δ<small>N-</small> | N : -1 kN | Mode de flambement | FSM | L : 0.041 m | δ<small>ki</small> : 1102.35</p>
          <svg class="drawing" viewBox="888 280 515 448">
            <defs>
              <pattern id="hatch" width="9" height="9" patternUnits="userSpaceOnUse" patternTransform="rotate(45 1043 329)"><path d="M4.500 0V9" stroke="#fff" stroke-width="1.100"/></pattern>
              <path id="rhs" d="M1070 329.500H1232A27 27 0 0 1 1259 356V662A27 27 0 0 1 1232 688.500H1070A27 27 0 0 1 1043.500 662V356A27 27 0 0 1 1070 329.500ZM1074 348A12 12 0 0 0 1062 364V654A12 12 0 0 0 1074 670H1228A12 12 0 0 0 1240 654V364A12 12 0 0 0 1228 348Z" fill-rule="evenodd" stroke="#666"/>
              <g id="half" fill="rgb(0 217 217 / .54)" stroke="#2a50e0"><path d="M1038.500 355C1000 458 1000 560 1038.500 663L1057 658C1018 558 1018 460 1057 360Z"/><path d="M1072 333.500Q1151 348 1230 333.500V352Q1151 366 1072 352Z"/></g>
              <g id="corner" fill="none" stroke="#1f46dc"><path d="M1038.500 355L1043 346L1045 344L1053 337.500L1063 333.500H1072V352H1061L1057 360Z" fill="rgb(0 217 217 / .54)" stroke="none"/><path d="M1063.500 333.500H1070.500V352H1063.500Z"/><path d="M1053.500 337.500L1060 334.500L1066 350.500L1061 352Z"/><path d="M1045 344L1051 339.500L1062 351.500L1058.500 354Z"/><path d="M1040 354.500L1043.500 346.500L1059 354L1056.500 360Z"/></g>
            </defs>
            <use href="#rhs" fill="#6cb9e8"/>
            <use href="#rhs" fill="url(#hatch)"/>
            <g stroke="#000" fill="none"><path d="M1038 303.500H1264M1043.500 299V317M1258.500 299V317M1017.500 324V694M1013 329.500H1031M1013 688.500H1031M1067 354L1090 376.500H1118M1067 359V353.500H1073M1235 419.500H1286"/></g>
            <g fill="#000"><circle cx="1043.500" cy="303.500" r="2.500"/><circle cx="1258.500" cy="303.500" r="2.500"/><circle cx="1017.500" cy="329.500" r="2.500"/><circle cx="1017.500" cy="688.500" r="2.500"/><circle cx="1240" cy="419.500" r="2.500"/><circle cx="1259" cy="419.500" r="2.500"/></g>
            <g class="dimtext"><text x="1151" y="300">30.0</text><text x="1105" y="373">2.6</text><text x="1273" y="416">2.6</text><text transform="translate(1014 509) rotate(-90)">50.0</text></g>
            <use href="#half"/><use href="#half" transform="rotate(180 1151 509)"/>
            <use href="#corner"/><use href="#corner" transform="rotate(180 1151 509)"/><use href="#corner" transform="matrix(-1 0 0 1 2302 0)"/><use href="#corner" transform="matrix(1 0 0 -1 0 1018)"/>
            <path d="M1151 509.500H1280" stroke="#a0a" stroke-dasharray="9 3 2 3" fill="none"/><path d="M1151.500 509V708" stroke="#b2b" stroke-dasharray="9 3 2 3" fill="none"/><path d="M1279 505.500V513.500L1288 509.500ZM1147.500 709H1155.500L1151.500 718Z" fill="#f0f"/><circle cx="1151" cy="509" r="2.500" fill="#f00"/>
            <g class="axistext"><text x="1286" y="521">y</text><text x="1141" y="721">z</text></g>
          </svg>
          <p class="unit">[mm]</p>
          <div class="field"><select aria-label="Mode affiché"><option>δN- | N : -1 kN | Mode de flambement | FSM</option></select><svg class="chev"><use href="#chev"/></svg></div>
          <div class="viewtools">
            <button class="ib off first" aria-label="Options" disabled><svg><use href="#tool"/></svg></button>
            <button class="ib wide" aria-label="Points"><svg><use href="#green"/></svg><svg class="caret"><use href="#caret"/></svg></button><button class="ib picked" aria-label="Cotes"><svg><use href="#dim"/></svg></button><button class="ib picked" aria-label="Axes"><svg><use href="#cyz"/></svg></button><button class="ib" aria-label="Centre de cisaillement"><svg><use href="#sc"/></svg></button><button class="ib" aria-label="Points de contrainte"><svg><use href="#ired"/></svg></button><button class="ib" aria-label="Pièces"><svg><use href="#iblue"/></svg></button><button class="ib off" aria-label="Numéros" disabled><svg><use href="#n123"/></svg></button><button class="ib" aria-label="Grille"><svg><use href="#gridb"/></svg></button><button class="ib off" aria-label="Règle" disabled><svg><use href="#ruler"/></svg></button><button class="ib wide" aria-label="Imprimer"><svg><use href="#print"/></svg><svg class="caret"><use href="#caret"/></svg></button><button class="ib" aria-label="Réinitialiser"><svg><use href="#zx"/></svg></button>
          </div>
        </div>
      </div>
    </div>
  </div>
  <footer class="dlgfoot"><button class="cmd default">OK</button><button class="cmd">Annuler</button><button class="cmd">Appliquer</button><svg class="sizer"><use href="#sizer"/></svg></footer>
</section>

<section class="dialog results-dialog" role="dialog" aria-label="Résultats de la méthode des bandes finies">
  <header class="titlebar">
    <svg class="logo"><use href="#logo"/></svg><h2>Résultats de la méthode des bandes finies</h2>
    <div class="wincontrols"><button aria-label="Réduire"><svg><use href="#min"/></svg></button><button aria-label="Agrandir"><svg><use href="#max"/></svg></button><button aria-label="Fermer la fenêtre"><svg><use href="#close"/></svg></button></div>
  </header>
  <div class="res-body">
    <div class="res-panel">
      <figure class="chartbox">
        <figcaption>δ<small>N-</small> | N : -1 kN | Mode de flambement | FSM | L : 0.041 m | δ<small>ki</small> : 1102.35</figcaption>
        <svg class="chart" viewBox="18 302 720 559">
          <defs><marker id="pt" markerWidth="5" markerHeight="5" refX="2" refY="2" markerUnits="userSpaceOnUse"><circle cx="2" cy="2" r="2" fill="#a0a0a0"/></marker></defs>
          <path stroke="#a0a0a0" stroke-dasharray="1 2" fill="none" d="M82 388.500H668M82 442.500H668M82 496.500H668M82 551.500H668M82 605.500H668M82 659.500H668M82 714.500H668M82 768.500H668M108.500 342V823M135.500 342V823M162.500 342V823M189.500 342V823M216.500 342V823M243.500 342V823M270.500 342V823M296.500 342V823M323.500 342V823M350.500 342V823M377.500 342V823M404.500 342V823M431.500 342V823M458.500 342V823M485.500 342V823M512.500 342V823M538.500 342V823M565.500 342V823M592.500 342V823M619.500 342V823M646.500 342V823"/>
          <path d="M82 330V823H678" stroke="#bdbdbd" stroke-width="2" fill="none"/><path d="M78 331L82 320L86 331ZM678 819V827L690 823Z" fill="#bdbdbd"/>
          <polyline fill="none" stroke="#0000ee" stroke-width="2" marker-start="url(#pt)" marker-mid="url(#pt)" marker-end="url(#pt)" points="84.7,341 84.9,419 85.7,566 86.9,675.5 88.6,738 90.8,770 93.4,786.5 96.6,795 100.2,798 104.4,799 109,797.5 114.1,794.5 119.7,790 125.8,783.5 132.3,775 139.3,764.5 146.9,762 154.9,763 163.4,766.5 172.4,771 181.9,776 191.8,781 202.3,786 213.2,790.5 224.6,794.5 236.5,798 248.9,801 261.8,803.5 275.2,806 289,808 303.3,810 318.1,811.3 333.5,812.6 349.2,813.7 365.5,814.6 382.3,815.4 399.5,816.2 417.3,816.8 435.5,817.4 454.2,818 473.4,818.5 493,819 513.2,819.3 533.9,819.6 555,820 576.6,820.3 598.7,820.5 621.3,820.7 644.4,820.9 668,821"/>
          <circle cx="104" cy="799" r="3" fill="#a83a10"/>
          <g class="ylab"><text x="75" y="391">20000.00</text><text x="75" y="445">17500.00</text><text x="75" y="500">15000.00</text><text x="75" y="554">12500.00</text><text x="75" y="608">10000.00</text><text x="75" y="662">7500.00</text><text x="75" y="717">5000.00</text><text x="75" y="771">2500.00</text></g>
          <g class="xlab"><text x="108" y="838">0.050</text><text x="162" y="838">0.150</text><text x="216" y="838">0.250</text><text x="270" y="838">0.350</text><text x="323" y="838">0.450</text><text x="377" y="838">0.550</text><text x="431" y="838">0.650</text><text x="485" y="838">0.750</text><text x="538" y="838">0.850</text><text x="592" y="838">0.950</text><text x="646" y="838">1.050</text><text x="150" y="321">Facteur de charge critique δ<tspan dy="1">ki</tspan></text><text x="148" y="333">[--]</text><text x="700" y="799">Longueur L</text><text x="700" y="811">[m]</text></g>
        </svg>
      </figure>
      <div class="side">
        <div class="vtools">
          <button class="ib wide" aria-label="Axe plus"><svg><use href="#axp"/></svg><svg class="caret"><use href="#caret"/></svg></button><button class="ib wide" aria-label="Courbes"><svg><use href="#axl"/></svg><svg class="caret"><use href="#caret"/></svg></button><button class="ib wide" aria-label="Imprimer"><svg><use href="#print"/></svg><svg class="caret"><use href="#caret"/></svg></button><button class="ib" aria-label="Agrandir X"><svg><use href="#zxp"/></svg></button><button class="ib" aria-label="Réduire X"><svg><use href="#zxm"/></svg></button><button class="ib" aria-label="Agrandir Y"><svg><use href="#zyp"/></svg></button><button class="ib" aria-label="Réduire Y"><svg><use href="#zym"/></svg></button><button class="ib" aria-label="Zoom initial"><svg><use href="#zx"/></svg></button><button class="ib" aria-label="Remplissage"><svg><use href="#area"/></svg></button><button class="ib" aria-label="Points"><svg><use href="#dot"/></svg></button>
        </div>
        <div class="vtools second"><button class="ib wide" aria-label="Somme"><svg><use href="#sigma"/></svg><svg class="caret"><use href="#caret"/></svg></button><button class="ib wide" aria-label="Axes"><svg><use href="#axpm"/></svg><svg class="caret"><use href="#caret"/></svg></button></div>
        <label for="dist">Distribution des points</label>
        <div class="field dist"><select id="dist"><option>Quadratique</option></select><svg class="chev"><use href="#chev"/></svg></div>
        <label for="nb">Nombre de points</label>
        <div class="numrow"><div class="field num"><input id="nb" inputmode="numeric" value="50"><svg class="spin"><use href="#spin"/></svg></div><span>[--]</span></div>
        <label for="lmin">Longueur min</label>
        <div class="numrow"><div class="field num"><input id="lmin" inputmode="decimal" value="0.005"><svg class="spin"><use href="#spin"/></svg></div><span>[m]</span></div>
        <label for="lmax">Longueur max</label>
        <div class="numrow lastrow"><div class="field num"><input id="lmax" inputmode="decimal" value="1.090"><svg class="spin"><use href="#spin"/></svg></div><span>[m]</span></div>
        <p class="legend"><i></i>Total</p>
      </div>
    </div>
  </div>
  <footer class="resfoot"><button class="ib units" aria-label="Unités"><i></i><span>0,<u>00</u></span></button><button class="cmd">Fermer</button></footer>
</section>
</div>
</body>
</html>
```
FILE: styles.css
```css
* { box-sizing: border-box; }
body { margin: 0; font: 11px/16px "Open Sans", "Noto Sans", sans-serif; color: #000; background: #f0f0f0; }
h1, h2, h3, p, ul, figure { margin: 0; padding: 0; font-size: 11px; font-weight: 400; }
button, input, select { font: inherit; color: inherit; border: 0; border-radius: 0; padding: 0; margin: 0; background: none; }
input:disabled, button:disabled { opacity: 1; color: inherit; }
select { appearance: none; }
svg { display: block; flex: none; overflow: visible; }
.defs { position: absolute; width: 0; height: 0; }
.desktop { position: relative; min-height: 100vh; overflow: hidden; }

/* Window chrome */
.titlebar { display: flex; align-items: center; height: 30px; padding-left: 7px; background: #fff; color: #888; }
.titlebar h1, .titlebar h2 { flex: 1; white-space: nowrap; padding-left: 6px; }
.titlebar-main { border-top: 1px solid #3a4560; height: 31px; }
.logo { width: 16px; height: 16px; }
.wincontrols { display: flex; }
.wincontrols button { width: 46px; height: 28px; display: grid; place-items: center; }
.wincontrols svg { width: 12px; height: 12px; }
.wincontrols .faint { color: #ddd; }
.titlebar-main .wincontrols { color: #777; margin-right: 1px; }

/* Main window */
.app { display: flex; flex-direction: column; min-height: 100vh; background: #f7f7f7; border-left: 1px solid #888; border-bottom: 2px solid #888; }
.strip { display: flex; justify-content: space-between; align-items: center; padding-right: 4px; border-bottom: 1px solid #ddd; flex: none; }
.strip-menu { height: 20px; padding-right: 6px; }
.strip-tools { height: 28px; padding: 0 3px 0 4px; }
.strip span { font-size: 13px; }
.flag { width: 16px; height: 12px; }
.x { width: 8px; height: 8px; }
.gripper { width: 3px; height: 20px; }
.workspace { flex: 1; display: flex; min-height: 0; }
.navigator { width: 273px; flex: none; display: flex; flex-direction: column; border-right: 2px solid #c8c8d4; padding-left: 3px; }
.navigator h2 { height: 21px; padding: 2px 3px; background: #d3e3f2; font-weight: 700; font-size: 12px; color: #333; }
.tree { flex: 1; background: #fff; padding: 5px 4px; display: flex; flex-direction: column; gap: 8px; }
.twist { width: 8px; height: 6px; margin-left: 1px; }
.hscroll { display: flex; align-items: center; height: 16px; background: #f0f0f0; gap: 6px; padding: 0 5px; flex: none; }
.h { width: 6px; height: 8px; }
.v { width: 8px; height: 6px; }
.hscroll i { height: 16px; background: #cdcdcd; }
.nav-thumb { width: 216px; margin-right: auto; }
.navtabs { height: 28px; display: flex; align-items: flex-start; border-top: 1px solid #c8c8d4; border-bottom: 2px solid #c8c8d4; }
.navtabs button { width: 38px; height: 23px; display: grid; place-items: center; border: solid #c8c8d4; border-width: 0 1px 1px 0; background: #ebebeb; }
.navtabs .on { height: 25px; background: #fff; border-bottom: 0; width: 39px; }
.navtabs svg { width: 16px; height: 16px; }
.right { flex: 1; min-width: 0; display: flex; flex-direction: column; padding: 0 0 0 4px; }
.view { flex: 1; background: #fff; display: flex; justify-content: flex-end; border-top: 1px solid #ccc; }
.model { width: 20px; height: 640px; }
.panelhead { height: 20px; background: #d3e3f2; display: flex; justify-content: flex-end; align-items: center; padding-right: 9px; flex: none; }
.panelmenu { height: 20px; border-bottom: 1px solid #ddd; flex: none; }
.paneltools { height: 36px; display: flex; justify-content: flex-end; padding: 7px 9px 0; flex: none; }
.help { width: 12px; height: 12px; }
.gridrow { display: flex; height: 96px; flex: none; }
.gridwrap { flex: 1; overflow: hidden; min-width: 0; }
.vscroll { width: 18px; background: #f0f0f0; display: flex; flex-direction: column; align-items: center; gap: 6px; }
.vscroll i { width: 15px; height: 29px; background: #cdcdcd; margin-bottom: auto; }
.vscroll svg:last-child { margin-bottom: 6px; }
.grid { table-layout: fixed; width: 1201px; border-collapse: collapse; background: #fff; }
.c60 { width: 60px; } .c138 { width: 138px; } .c103 { width: 103px; } .c200 { width: 200px; } .c100 { width: 100px; }
.grid th, .grid td { border: 1px solid #dcdcdc; border-width: 0 1px 1px 0; padding: 0 4px; height: 16px; line-height: 15px; overflow: hidden; white-space: nowrap; font-weight: 400; }
.grid th { background: #f0f0f0; text-align: center; }
.grid thead th { height: 33px; line-height: 16px; }
.grid thead .opt { text-align: left; padding-left: 21px; }
.grid tbody th { background: #e0e0e0; }
.grid td { text-align: right; background: #f9f9f3; }
.grid .empty td, .grid .w { background: #fff; }
.grid .empty .nu { background: #f9f9f3; }
.grid .link td { color: #0a8cf0; }
sup { font-size: 8px; line-height: 0; }
.grid-thumb { flex: 0 1 704px; }
.hscroll-grid .h:last-child { margin-left: auto; margin-right: 19px; }
.sheets { display: flex; height: 24px; padding-top: 1px; border-bottom: 1px solid #ccc; flex: none; }
.sheets button { min-width: 61px; padding: 0 7px; height: 21px; border: 1px solid #c8c8d4; border-left-width: 0; background: #ebebeb; white-space: nowrap; flex: none; }
.sheets .on { background: #fff; height: 22px; border-bottom: 0; border-left-width: 1px; }
.sheets .last { flex: 1 1 0; min-width: 0; overflow: hidden; border-right: 0; text-align: left; }
.pager { width: 130px; flex: none; display: flex; align-items: center; gap: 11px; padding-left: 4px; white-space: nowrap; }
.pager svg { width: 8px; height: 8px; }
.pager span { padding: 0 2px; }
.sheetnav { display: flex; gap: 8px; padding: 4px 6px; }
.sheetnav svg { width: 6px; height: 10px; }

.toolbar { display: flex; align-items: center; height: 23px; flex: none; padding-left: 1px; }
.toolbar button { width: 24px; height: 22px; display: grid; place-items: center; flex: none; }
.toolbar button svg { width: 17px; height: 17px; }
.toolbar button.on { background: #cce4f7; border: 1px solid #90c8f6; }
.toolbar .caret { margin: 0 3px 0 2px; }
.sep { width: 1px; height: 17px; background: #999; margin: 0 3px; flex: none; }
.more { width: 20px; padding-left: 6px; font-size: 13px; }
.group { display: flex; margin-left: 14px; }
.group.tight { margin-left: 7px; }
.cs { width: 120px; height: 20px; flex: none; }
.status { display: flex; height: 18px; background: #e6e6f0; flex: none; line-height: 18px; }
.status span { border-left: 1px solid #c8c8d4; padding-left: 4px; }
.st-a { flex: 1; } .st-b { width: 106px; } .st-c { width: 206px; } .st-d { width: 66px; } .st-e { width: 76px; } .st-f { width: 20px; }
.status svg { width: 9px; height: 9px; margin: 7px 0 0 3px; }

/* Shared controls */
.card { background: #fff; padding: 0 5px; }
.card h3 { font-weight: 700; color: #5b6c99; height: 22px; line-height: 18px; }
.row { display: flex; gap: 3px; }
.row .grow { flex: 1; min-width: 0; margin-right: 2px; }
.row input { width: 100%; height: 20px; padding: 0 5px; background: #e6e6f1; display: block; }
.row input.off { background: #e5e5e5; padding: 0 3px; }
.field { display: flex; align-items: center; height: 21px; background: #e6e6f1; }
.field select { flex: 1; min-width: 0; padding-left: 5px; height: 20px; }
.chev { width: 10px; height: 6px; margin-right: 4px; }
.caret { width: 7px; height: 4px; }
.swatch { width: 11px; height: 11px; flex: none; margin-left: 5px; }
.cyan { background: #c8ffff; } .olive { background: #adad3e; } .blue { background: #55aaff; }
.ib { width: 25px; height: 21px; background: #cce4f7; display: flex; align-items: center; justify-content: center; flex: none; }
.ib svg { width: 17px; height: 17px; }
.ib.off { background: #e5e5e5; }
.ib.picked { border: 1px solid #00559b; }
.ib.wide { width: 37px; gap: 8px; justify-content: flex-start; padding-left: 2px; }
.ib .caret { width: 7px; height: 4px; }
.cmd { width: 81px; height: 21px; border: 1px solid #adadad; background: #e1e1e1; }
.cmd.default { border: 2px solid #0078d7; }

/* Section dialog */
.dialog { position: absolute; display: flex; flex-direction: column; }
.section-dialog { inset: 31px 18px 177px 15px; border: 1px solid #999; background: #fff; box-shadow: 0 3px 12px rgb(0 0 0 / .3); }
.sec-body { flex: 1; min-height: 0; background: #d1d0d6; padding: 9px; display: grid; grid-template: 47px 33px 1fr / 216px 92px 1fr 524px; column-gap: 10px; }
.list { grid-row: 1 / 4; padding: 0; display: flex; flex-direction: column; }
.list h3 { padding-left: 5px; height: 20px; }
.list ul { list-style: none; padding-left: 1px; }
.list li { display: flex; align-items: center; height: 18px; white-space: nowrap; }
.list li.sel { background: #cce8ff; margin-right: 1px; }
.list .swatch { margin-left: 3px; }
.list li svg { width: 12px; height: 12px; margin: 0 5px 0 4px; }
.list b { width: 13px; border: solid #e6e6e6; border-width: 0 1px; padding-left: 3px; font-weight: 400; }
.list li span { padding-left: 3px; }
.listfill { flex: 1; width: 13px; margin-left: 36px; border: solid #e6e6e6; border-width: 0 1px; }
.tabs { grid-column: 2 / 5; display: flex; align-items: flex-end; padding-top: 10px; }
.tabs button { height: 21px; min-width: 61px; background: #dcdcdc; border-right: 1px solid #cfcfcf; padding: 0 7px; white-space: nowrap; }
.tabs button.on { background: #ebebeb; height: 23px; min-width: 63px; border: 0; }
.tabs .plain { border: 0; }
.tabpage { grid-column: 2 / 5; background: #ebebeb; padding: 8px 9px 7px; display: grid; grid-template-columns: 1fr 515px; gap: 10px; min-height: 0; }
.leftcol { display: grid; grid-template: 47px 1fr / 350px 1fr; gap: 10px; min-height: 0; }
.mat { grid-column: 1 / 3; }
.rightcol { display: flex; flex-direction: column; gap: 10px; min-height: 0; }
.shapes { height: 81px; flex: none; display: flex; flex-wrap: wrap; gap: 5px; align-content: flex-start; padding: 4px 100px 0 5px; }
.preview { flex: 1; display: flex; flex-direction: column; padding: 3px 5px; }
.preview p { line-height: 13px; padding-left: 16px; white-space: nowrap; }
.preview .mode { padding-left: 5px; }
.drawing { width: calc(100% + 10px); height: 448px; margin-left: -5px; }
.preview .unit { text-align: right; line-height: 16px; margin-bottom: 6px; }
.viewtools { display: flex; gap: 3px; margin-top: 7px; }
.viewtools .first { margin-right: auto; }
small { font-size: 10px; position: relative; top: 1px; }
text { font: 11px "Open Sans", "Noto Sans", sans-serif; }
.six { font: 700 16px "Open Sans", sans-serif; fill: #f5c927; stroke: #5c4a12; stroke-width: 2px; paint-order: stroke; }
.dimtext text { text-anchor: middle; }
.axistext text { fill: #f0f; text-anchor: middle; }
.dlgfoot { position: relative; height: 41px; flex: none; display: flex; justify-content: flex-end; align-items: center; gap: 10px; padding: 1px 10px 0; }
.sizer { position: absolute; right: 1px; bottom: 1px; width: 9px; height: 9px; }

/* Results dialog */
.results-dialog { inset: 236px 531px 110px 7px; border: 1px solid #1b7fd4; background: #fff; box-shadow: 2px 6px 18px rgb(0 0 0 / .4); }
.results-dialog .titlebar { background: #0078d7; color: #fff; }
.res-body { flex: 1; background: #d1d0d6; padding: 9px 9px 8px; display: flex; }
.res-panel { flex: 1; background: #fff; display: flex; min-width: 0; }
.chartbox { flex: 1; min-width: 0; margin-bottom: 17px; border: 1px solid #f3f1e2; overflow: hidden; }
.chartbox figcaption { padding: 8px 0 0 8px; height: 25px; color: #404048; white-space: nowrap; }
.chart { width: 100%; height: auto; }
.chart text { font-size: 9px; fill: #505058; }
.ylab text { text-anchor: end; }
.xlab text { text-anchor: middle; }
.side { width: 160px; padding: 8px 5px 0 15px; display: flex; flex-direction: column; }
.vtools { display: flex; flex-direction: column; gap: 3px; align-self: flex-end; width: 37px; margin-right: 5px; }
.vtools.second { margin: 7px 0 12px; }
.side label { margin-bottom: 3px; }
.dist { margin-bottom: 16px; }
.numrow { display: flex; gap: 5px; height: 20px; margin-bottom: 16px; line-height: 21px; }
.numrow.lastrow { margin-bottom: 7px; }
.num { width: 70px; height: 20px; }
.num input { flex: 1; min-width: 0; text-align: right; height: 20px; }
.spin { width: 6px; height: 13px; margin: 0 5px 0 9px; }
.legend { display: flex; align-items: center; gap: 4px; }
.legend i { width: 21px; height: 2px; background: #00f; }
.resfoot { height: 42px; flex: none; display: flex; justify-content: space-between; align-items: center; padding: 0 10px 0 9px; }
.units { flex-direction: column; line-height: 11px; font-size: 10px; }
.units i { width: 16px; height: 5px; background: #8fd67c; }
.units u { color: #4a6fe0; }
```
